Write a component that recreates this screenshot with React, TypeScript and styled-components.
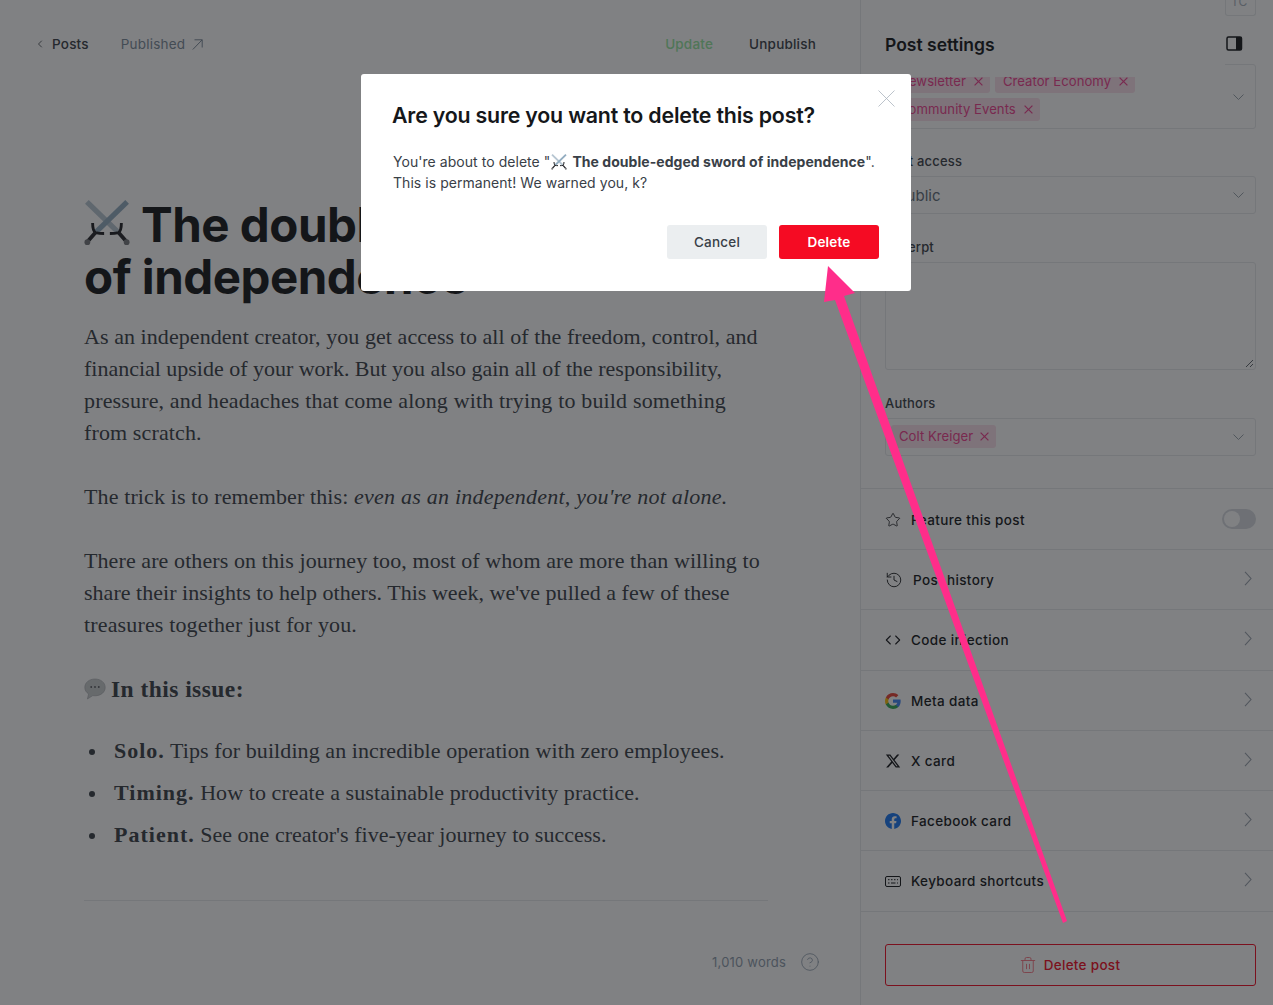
import React from "react";
import styled, { createGlobalStyle } from "styled-components";
import { ChevronLeft, Star, History, Code, Trash2, HelpCircle } from "lucide-react";

const Global = createGlobalStyle`
  html, body { margin: 0; padding: 0; background: #fff; height: 100%; }
  * { box-sizing: border-box; }
  body { font-family: Inter, "Liberation Sans", sans-serif; color: #15171a; }
`;

const Page = styled.div`
  position: relative; width: 1273px; height: 1005px; overflow: hidden; display: flex; background: #fff;
`;
const Main = styled.main`
  width: 860px; flex: none; display: flex; flex-direction: column; padding: 0 41px 0 34px;
`;
const TopBar = styled.div`
  height: 88px; display: flex; align-items: center; gap: 32px; font-size: 13.5px; letter-spacing: .2px; padding-right: 3px;
`;
const Crumb = styled.a`
  display: flex; align-items: center; gap: 6px; font-weight: 500; color: #394047;
`;
const Status = styled.span`
  display: flex; align-items: center; gap: 7px; color: #7c8b9a;
`;
const Spacer = styled.div` flex: 1; `;
const Actions = styled.div`
  display: flex; gap: 36px;
`;
const TopAction = styled.span<{ $green?: boolean }>`
  font-weight: 500; color: ${p => (p.$green ? "#97e7a1" : "#394047")};
`;
const Article = styled.article`
  margin: 111px 0 0 50px; width: 684px; flex: 1; display: flex; flex-direction: column;
`;
const Title = styled.h1`
  font-size: 47.5px; line-height: 52px; font-weight: 700; margin: 0 0 18px; letter-spacing: -.5px; color: #15171a; white-space: nowrap;
`;
const Para = styled.p`
  font-family: "Liberation Serif", serif; font-size: 22px; line-height: 32px; color: #394047; margin: 0 0 32px; white-space: nowrap;
  em { letter-spacing: .22px; }
`;
const Line = styled.span<{ $ls: number }>`
  display: block; letter-spacing: ${p => p.$ls}px;
`;
const SubHead = styled.h3`
  display: flex; align-items: center; gap: 5px; font-family: "Liberation Serif", serif; font-size: 23.5px; line-height: 32px; font-weight: 700; letter-spacing: .45px; color: #394047; margin: 0 0 30px;
`;
const Bullets = styled.ul`
  list-style: none; margin: 0; padding: 0 0 0 30px; font-family: "Liberation Serif", serif; font-size: 22px; line-height: 32px; letter-spacing: .08px; color: #394047;
  li { position: relative; margin-bottom: 10px; white-space: nowrap; }
  li:nth-child(3) { letter-spacing: .02px; }
  li::before { content: ""; position: absolute; left: -25px; top: 14px; width: 6px; height: 6px; border-radius: 50%; background: #394047; }
  b { font-weight: 700; letter-spacing: 1px; }
`;
const Rule = styled.hr`
  border: 0; border-top: 1px solid #e6e9eb; margin: 39px 0 0; width: 684px;
`;
const WordCount = styled.div`
  display: flex; justify-content: flex-end; align-items: center; gap: 14px; margin: 51px -52px 0 0; font-size: 13px; letter-spacing: .2px; color: #8e9cac;
`;

const Sidebar = styled.aside`
  position: relative; width: 413px; flex: none; border-left: 1px solid #e6e9eb; overflow: hidden; display: flex; flex-direction: column;
`;
const HeaderMask = styled.div`
  position: absolute; top: 0; left: 0; width: 364px; height: 77px; background: #fff; padding: 34px 0 0 24px;
  font-size: 17.5px; line-height: 22px; font-weight: 600; color: #15171a;
`;
const PanelToggle = styled.svg`
  position: absolute; top: 36px; left: 365px;
`;
const Form = styled.div`
  padding: 0 17px 0 24px; display: flex; flex-direction: column;
`;
const Fragment = styled.div`
  height: 16px; border: 1px solid #e6e9eb; border-top: 0; border-radius: 0 0 3px 3px; margin-bottom: 48px; margin-left: 340px;
  font-size: 12px; color: #abb4be; line-height: 4px; padding-left: 5px; overflow: hidden;
`;
const FieldBox = styled.div<{ $h: number; $mb?: number }>`
  position: relative; height: ${p => p.$h}px; border: 1px solid #e6e9eb; border-radius: 3px; margin-bottom: ${p => p.$mb ?? 0}px;
  display: flex; align-items: center; color: #abb4be;
`;
const TagWrap = styled.div<{ $top: number }>`
  display: flex; flex-wrap: wrap; gap: 5px; padding: ${p => p.$top}px 5px 0; align-content: flex-start; flex: 1; height: 100%;
`;
const Tag = styled.span<{ $gap?: number }>`
  display: inline-flex; align-items: center; gap: ${p => p.$gap ?? 8}px; height: 23px; padding: 0 7px 2px 8px; background: #fae0eb; color: #f0418f; border-radius: 3px;
  font-size: 13.1px; letter-spacing: .05px; white-space: nowrap;
`;
const TagX = styled.svg`
  flex: none; margin-top: 2px;
`;
const SelectChevron = styled.svg`
  position: absolute; right: 11px; top: 50%; margin-top: -3px;
`;
const Label = styled.label`
  font-size: 13px; line-height: 16px; font-weight: 500; letter-spacing: .2px; color: #394047; margin-bottom: 7px;
`;
const SelectText = styled.span`
  font-size: 15px; color: #626d79; padding-left: 11px;
`;
const ResizeGrip = styled.svg`
  position: absolute; right: 1px; bottom: 1px;
`;
const Rows = styled.div`
  display: flex; flex-direction: column; margin-top: 32px;
`;
const Row = styled.div<{ $h: number; $nudge?: number }>`
  height: ${p => p.$h}px; border-top: 1px solid #e6e9eb; padding: ${p => p.$nudge ?? 0}px 17px 0 24px; display: flex; align-items: center; gap: 10px;
  font-size: 13.5px; font-weight: 500; letter-spacing: .36px; color: #15171a;
`;
const RowIcon = styled.span<{ $extra?: number }>`
  width: ${p => 16 + (p.$extra ?? 0)}px; height: 16px; display: flex; align-items: center; justify-content: center; flex: none;
`;
const RowLabel = styled.span` flex: 1; `;
const RowChevron = styled.svg`
  flex: none; margin: -3px 4px 0 0;
`;
const Toggle = styled.span`
  width: 34px; height: 20px; border-radius: 10px; background: #d7dbe0; position: relative; display: block; margin-top: -1px;
  &::after { content: ""; position: absolute; left: 2px; top: 2px; width: 16px; height: 16px; border-radius: 50%; background: #fff; }
`;
const DeleteWrap = styled.div`
  border-top: 1px solid #e6e9eb; padding: 32px 17px 0 24px;
`;
const DeletePost = styled.button`
  width: 100%; height: 42px; border: 1px solid #f50b23; border-radius: 3px; background: #fff; color: #f50b23; display: flex; align-items: center; justify-content: center; gap: 7px;
  font: 500 13.5px Inter, sans-serif; letter-spacing: .3px;
  svg { color: #f8717f; margin-left: -2px; }
`;

const Overlay = styled.div`
  position: absolute; inset: 0; background: rgba(21,23,26,.54); display: flex; justify-content: center; align-items: flex-start; padding: 74px 1px 0 0;
`;
const Modal = styled.div`
  position: relative; width: 550px; height: 217px; background: #fff; border-radius: 3px; padding: 28px 32px 0 32px; display: flex; flex-direction: column;
`;
const ModalTitle = styled.h2`
  font-size: 21.35px; line-height: 26px; font-weight: 600; margin: 0 0 23px -1px; letter-spacing: -.2px; color: #15171a;
`;
const ModalText = styled.p`
  font-size: 14px; line-height: 21px; letter-spacing: .05px; margin: 0 0 32px; color: #394047; white-space: nowrap;
  b { font-weight: 700; }
  svg { vertical-align: -3px; margin: 0 1px; }
`;
const ModalActions = styled.div`
  display: flex; justify-content: flex-end; gap: 12px;
`;
const Button = styled.button<{ $red?: boolean }>`
  width: 100px; height: 34px; border: 0; border-radius: 3px; background: ${p => (p.$red ? "#f50b23" : "#ebeef0")}; color: ${p => (p.$red ? "#fff" : "#394047")};
  font: ${p => (p.$red ? 600 : 500)} 13.5px Inter, sans-serif; letter-spacing: .2px;
`;
const CloseX = styled.svg`
  position: absolute; right: 16px; top: 16px;
`;
const ArrowLayer = styled.svg`
  position: absolute; inset: 0; pointer-events: none;
`;

const Swords = ({ s, inline }: { s: number; inline?: boolean }) => (
  <svg width={s} height={s} viewBox="0 0 48 48" fill="none" style={inline ? undefined : { verticalAlign: "-4px", marginRight: 11 }}>
    <path d="M3 2 L35 33" stroke="#b7c6d2" strokeWidth="5.500" />
    <path d="M45 2 L13 33" stroke="#93adc1" strokeWidth="5.500" />
    <path d="M9 24 Q9 32 12 34 Q16 35 21 35 M39 24 Q39 32 36 34 Q32 35 27 35" stroke="#1f2023" strokeWidth="3" />
    <path d="M12 34 L4 43 M36 34 L44 43" stroke="#26272b" strokeWidth="4" />
    <circle cx="3.500" cy="44" r="3" fill="#77787c" /><circle cx="44.500" cy="44" r="3" fill="#77787c" />
  </svg>
);
const Bubble = () => (
  <svg width="22" height="22" viewBox="0 0 22 22">
    <path d="M11 1C5.200 1 .8 4.600.8 9.400c0 2.800 1.500 5 3.800 6.500L3.400 21l5.400-3.400c.7.1 1.400.2 2.200.2 5.800 0 10.200-3.600 10.200-8.400S16.800 1 11 1Z" fill="#c9ccce" stroke="#a4a8ab" strokeWidth=".6" />
    <circle cx="7.200" cy="9" r=".9" fill="#55585c" /><circle cx="11" cy="9" r=".9" fill="#55585c" /><circle cx="14.800" cy="9" r=".9" fill="#55585c" />
  </svg>
);
const Google = () => (
  <svg width="16" height="16" viewBox="0 0 24 24">
    <path fill="#4285F4" d="M23.500 12.300c0-.9-.1-1.700-.2-2.500H12v4.700h6.500c-.3 1.500-1.100 2.700-2.400 3.600v3h3.900c2.200-2.100 3.500-5.100 3.500-8.800Z" />
    <path fill="#34A853" d="M12 24c3.200 0 6-1.100 8-2.900l-3.900-3c-1.100.7-2.500 1.200-4.100 1.200-3.100 0-5.800-2.100-6.700-5H1.300v3.100C3.300 21.300 7.300 24 12 24Z" />
    <path fill="#FBBC05" d="M5.300 14.300c-.3-.7-.4-1.500-.4-2.300s.1-1.600.4-2.300V6.600h-4C.5 8.200 0 10 0 12s.5 3.800 1.300 5.400l4-3.100Z" />
    <path fill="#EA4335" d="M12 4.800c1.800 0 3.300.6 4.600 1.800L20 3.200C18 1.200 15.200 0 12 0 7.300 0 3.300 2.700 1.300 6.600l4 3.100c.9-2.900 3.600-4.900 6.700-4.900Z" />
  </svg>
);
const XLogo = () => (
  <svg width="16" height="16" viewBox="0 0 24 24" fill="#15171a">
    <path d="M18.244 2.250h3.308l-7.227 8.260 8.502 11.240H16.170l-5.214-6.817L4.990 21.750H1.680l7.730-8.835L1.254 2.250H8.080l4.713 6.231 5.450-6.231Zm-1.161 17.520h1.833L7.084 4.126H5.117L17.083 19.770Z" />
  </svg>
);
const Facebook = () => (
  <svg width="16" height="16" viewBox="0 0 24 24">
    <path fill="#1877F2" d="M24 12.070C24 5.400 18.630 0 12 0S0 5.400 0 12.070C0 18.100 4.390 23.100 10.130 24v-8.440H7.080v-3.490h3.050V9.410c0-3.030 1.790-4.700 4.530-4.700 1.310 0 2.680.23 2.680.23v2.970h-1.510c-1.490 0-1.960.93-1.960 1.880v2.260h3.330l-.53 3.490h-2.800V24C19.610 23.100 24 18.100 24 12.070Z" />
  </svg>
);
const KeyboardIcon = () => (
  <svg width="16" height="11" viewBox="0 0 16 11" fill="none" stroke="#15171a">
    <rect x=".5" y=".5" width="15" height="10" rx="1.500" strokeWidth="1" />
    <path d="M3 3.700h1.500M6 3.700h1.500M9 3.700h1.500M12 3.700h1M3 7h1.500M6 7h4.500M12 7h1" strokeWidth="1" />
  </svg>
);
const Xs = () => (
  <TagX width="9" height="9" viewBox="0 0 9 9"><path d="M.6.600 8.400 8.400M8.400.600.6 8.400" stroke="currentColor" strokeWidth="1.200" fill="none" /></TagX>
);
const Down = () => (
  <SelectChevron width="11" height="6" viewBox="0 0 11 6"><path d="M.5.500 5.500 5.500 10.500.500" stroke="#9aa3ad" strokeWidth="1" fill="none" /></SelectChevron>
);
const Right = () => (
  <RowChevron width="8" height="15" viewBox="0 0 8 15"><path d="M1 .800 7 7.500 1 14.200" stroke="#9aa3ad" strokeWidth="1.100" fill="none" /></RowChevron>
);

const rows = [
  { icon: <History size={22} strokeWidth={1.2} />, extra: 2, label: "Post history", h: 60 },
  { icon: <Code size={20} strokeWidth={1.6} />, label: "Code injection", h: 61 },
  { icon: <Google />, label: "Meta data", h: 60 },
  { icon: <XLogo />, label: "X card", h: 60 },
  { icon: <Facebook />, label: "Facebook card", h: 60 },
  { icon: <KeyboardIcon />, label: "Keyboard shortcuts", h: 61 },
];

export default function App() {
  return (
    <Page>
      <Global />
      <Main>
        <TopBar>
          <Crumb><ChevronLeft size={12} strokeWidth={1.6} />Posts</Crumb>
          <Status>Published
            <svg width="11" height="11" viewBox="0 0 11 11" fill="none" stroke="#7c8b9a" strokeWidth="1"><path d="M.8 10.500 10.200.800M2.500.800h7.700v7.700" /></svg>
          </Status>
          <Spacer />
          <Actions>
            <TopAction $green>Update</TopAction>
            <TopAction>Unpublish</TopAction>
          </Actions>
        </TopBar>
        <Article>
          <Title><Swords s={46} />The double-edged sword<br />of independence</Title>
          <Para>
            <Line $ls={0.065}>As an independent creator, you get access to all of the freedom, control, and</Line>
            <Line $ls={-0.013}>financial upside of your work. But you also gain all of the responsibility,</Line>
            <Line $ls={0.155}>pressure, and headaches that come along with trying to build something</Line>
            <Line $ls={0.12}>from scratch.</Line>
          </Para>
          <Para><Line $ls={0.12}>The trick is to remember this: <em>even as an independent, you're not alone.</em></Line></Para>
          <Para>
            <Line $ls={0.09}>There are others on this journey too, most of whom are more than willing to</Line>
            <Line $ls={0.03}>share their insights to help others. This week, we've pulled a few of these</Line>
            <Line $ls={0.15}>treasures together just for you.</Line>
          </Para>
          <SubHead><Bubble />In this issue:</SubHead>
          <Bullets>
            <li><b>Solo.</b> Tips for building an incredible operation with zero employees.</li>
            <li><b>Timing.</b> How to create a sustainable productivity practice.</li>
            <li><b>Patient.</b> See one creator's five-year journey to success.</li>
          </Bullets>
          <Rule />
          <WordCount>1,010 words <HelpCircle size={20} strokeWidth={1} /></WordCount>
        </Article>
      </Main>
      <Sidebar>
        <Form>
          <Fragment>TC</Fragment>
          <FieldBox $h={65} $mb={24}>
            <TagWrap $top={5}>
              <Tag>Newsletter <Xs /></Tag>
              <Tag>Creator Economy <Xs /></Tag>
              <Tag>Community Events <Xs /></Tag>
            </TagWrap>
            <Down />
          </FieldBox>
          <Label>Post access</Label>
          <FieldBox $h={38} $mb={25}>
            <SelectText>Public</SelectText>
            <Down />
          </FieldBox>
          <Label>Excerpt</Label>
          <FieldBox $h={108} $mb={25}>
            <ResizeGrip width="9" height="9" viewBox="0 0 9 9"><path d="M1 8 8 1M5 8 8 5" stroke="#394047" strokeWidth=".8" fill="none" /></ResizeGrip>
          </FieldBox>
          <Label>Authors</Label>
          <FieldBox $h={38}>
            <TagWrap $top={6}>
              <Tag $gap={7}>Colt Kreiger <Xs /></Tag>
            </TagWrap>
            <Down />
          </FieldBox>
        </Form>
        <Rows>
          <Row $h={61} $nudge={1}>
            <RowIcon><Star size={20} strokeWidth={1.2} /></RowIcon>
            <RowLabel>Feature this post</RowLabel>
            <Toggle />
          </Row>
          {rows.map(r => (
            <Row $h={r.h} key={r.label}>
              <RowIcon $extra={r.extra}>{r.icon}</RowIcon>
              <RowLabel>{r.label}</RowLabel>
              <Right />
            </Row>
          ))}
        </Rows>
        <DeleteWrap>
          <DeletePost><Trash2 size={18} strokeWidth={1.2} />Delete post</DeletePost>
        </DeleteWrap>
        <HeaderMask>Post settings</HeaderMask>
        <PanelToggle width="17" height="15" viewBox="0 0 17 15">
          <rect x="1" y="1" width="14.500" height="13" rx="1.500" fill="none" stroke="#15171a" strokeWidth="1.500" />
          <rect x="10" y="1" width="5.500" height="13" fill="#15171a" />
        </PanelToggle>
      </Sidebar>
      <Overlay>
        <Modal>
          <CloseX width="17" height="17" viewBox="0 0 17 17"><path d="M.5.500 16.500 16.500M16.500.500.500 16.500" stroke="#abb4be" strokeWidth=".8" fill="none" /></CloseX>
          <ModalTitle>Are you sure you want to delete this post?</ModalTitle>
          <ModalText>You're about to delete "<Swords s={16} inline /> <b>The double-edged sword of independence</b>".<br />This is permanent! We warned you, k?</ModalText>
          <ModalActions>
            <Button>Cancel</Button>
            <Button $red>Delete</Button>
          </ModalActions>
        </Modal>
      </Overlay>
      <ArrowLayer width="1273" height="1005" viewBox="0 0 1273 1005">
        <polygon points="828,266 855,293 844,296 1067,921 1063,923 835,300 824,302" fill="#ff2d8a" />
      </ArrowLayer>
    </Page>
  );
}
